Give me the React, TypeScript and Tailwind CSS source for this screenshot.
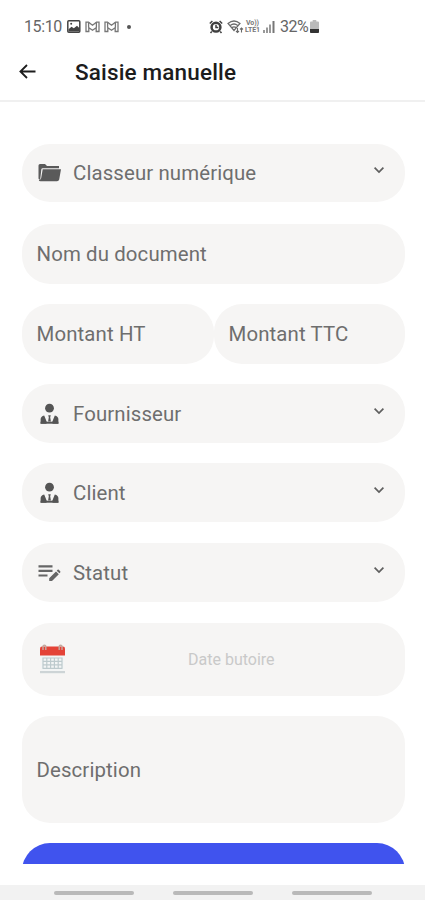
import type { ReactNode } from 'react';

interface FieldProps {
  label: string;
  icon?: ReactNode;
  className?: string;
  select?: boolean;
}

function Field({ label, icon, className = 'h-[59px]', select }: FieldProps) {
  return (
    <div className={`flex shrink-0 items-center rounded-[28px] bg-[#f6f5f4] pl-[14.5px] pr-5 ${className}`}>
      {icon && <span className="flex w-[36.5px] shrink-0 items-center">{icon}</span>}
      <span className="whitespace-nowrap text-[20.4px] leading-6 tracking-[0.12px] text-[#6e6e6e]">{label}</span>
      {select && (
        <svg className="-mt-1.5 ml-auto h-3 w-3" viewBox="0 0 12 12" fill="none" stroke="#5f5f5f" strokeWidth={1.7}>
          <path d="M1.6 3.6 6 8 10.4 3.6" />
        </svg>
      )}
    </div>
  );
}

function FolderIcon() {
  return (
    <svg className="h-5 w-6" viewBox="0 0 24 20" fill="#5a5a5a">
      <path d="M1.5 2.5Q1.5 1 3 1H8l2 2h12v2.2H5.7Q4.5 5.2 4.3 6.4L3.2 16.8Q1.5 16.5 1.5 15.5Z" />
      <path d="M5.7 6.3h18.3L22.2 16.5Q21.8 18.3 20 18.3H3.5Q2 18.3 1.8 17Q3.9 17 4.2 15Z" />
    </svg>
  );
}

function PersonIcon() {
  return (
    <svg className="ml-[3px] h-[22px] w-5" viewBox="0 0 20 22" fill="#555">
      <circle cx="9.5" cy="5.2" r="4.4" />
      <path d="M.6 20.7v-4q0-3.3 3.6-4.1l2.3 5.6V20.7Z" />
      <path d="M18.4 20.7v-4q0-3.3-3.6-4.1l-2.3 5.6V20.7Z" />
      <path d="M8.2 12.2h2.6l-.6 2 .7 4.2h-2.8l.7-4.2Z" />
      <path d="M.6 18.7h17.8v2H.6Z" />
    </svg>
  );
}

function EditIcon() {
  return (
    <svg className="h-5 w-6" viewBox="0 0 24 20" fill="#666">
      <path d="M1.5 2.2h14v2.2h-14zM1.5 6.8h14V9h-14zM1.5 11.4h9v2.2h-9z" />
      <path d="M12.2 18v-2.8l6.8-6.8 2.8 2.8L15 18ZM19.7 7.7l.9-.9q.6-.5 1.2 0l1.4 1.4q.5.6 0 1.2l-.8.9Z" />
    </svg>
  );
}

function CalendarIcon() {
  return (
    <svg className="-mt-0.5 h-8 w-[27px]" viewBox="0 0 27 32">
      <path d="M2 11h23v17.5H2z" fill="#f3f5f5" />
      <path d="M1 28h25v2.2H1z" fill="#cdd4d6" />
      <path d="M1 5.5Q1 3.5 3 3.5h21q2 0 2 2V12.5H1Z" fill="#e44337" />
      <path
        d="M3.5 15h20M3.5 18.4h20M3.5 21.8h20M3.5 25.4h20M4 14.5v11M7.8 14.5v11M11.6 14.5v11M15.4 14.5v11M19.2 14.5v11M23 14.5v11"
        stroke="#bdcacd"
        strokeWidth="1.2"
        fill="none"
      />
      <path d="M4 7V3.6a1.4 1.4 0 0 1 2.8 0V7M20.2 7V3.6a1.4 1.4 0 0 1 2.8 0V7" stroke="#c3aaa0" strokeWidth="1.4" fill="none" />
    </svg>
  );
}

function MailIcon() {
  return (
    <svg className="h-3 w-[15px]" viewBox="0 0 15 12" fill="none" stroke="#777" strokeWidth="1.3">
      <path d="M1 1.2h2.5l4 3.1 4-3.1H14v9.3h-2.8V6.8L7.5 9.2 3.8 6.8v3.7H1Z" />
      <path d="M3.6 1.2v5.4M11.4 1.2v5.4" />
    </svg>
  );
}

function StatusBar() {
  return (
    <div className="flex h-[46px] shrink-0 items-center pl-6 pt-[7px] text-[#666]">
      <span className="w-[43px] text-[16px] tracking-[-0.4px]">15:10</span>
      <svg className="h-[13px] w-[14px]" viewBox="0 0 14 13">
        <rect x=".8" y=".8" width="12" height="11.4" rx="1" fill="#fff" stroke="#444" strokeWidth="1.5" />
        <path d="M1.5 11.5V9.3l3-2.5 2.3 1.4L10 5.8l2.5 2.5v3.2Z" fill="#444" />
        <circle cx="4.2" cy="3.8" r="1" fill="#444" />
      </svg>
      <div className="ml-1 flex gap-1">
        <MailIcon />
        <MailIcon />
      </div>
      <span className="ml-2 h-1 w-1 rounded-full bg-[#555]" />
      <svg className="ml-[78px] h-[14px] w-[14px]" viewBox="0 0 14 14" fill="none" stroke="#3f3f3f">
        <circle cx="7" cy="7.2" r="4.4" strokeWidth="2.5" />
        <path d="M7 4.8v2.7h2.3M.8 3.5 3.4 1M13.2 3.5 10.6 1M2.8 11.5 1.5 13M11.2 11.5l1.3 1.5" strokeWidth="1.5" />
      </svg>
      <svg className="ml-1 h-[14px] w-[17px]" viewBox="0 0 17 14" fill="none" stroke="#6a6a6a" strokeWidth="1.3">
        <path d="M1 3.4q6-4.8 12 0L7 10.5ZM3.2 5.4q3.8-2.8 7.6 0M5.2 7.4q1.8-1.2 3.6 0" />
        <path d="M10.5 8v4.5M9 11l1.5 1.5L12 11M14.5 12.5V8M13 9.5 14.5 8 16 9.5" strokeWidth="1.1" />
      </svg>
      <span className="flex w-[17px] flex-col items-center text-[7px] font-bold leading-[7px] tracking-[-0.1px] text-[#777]">
        <span>Vo))</span>
        <span>LTE1</span>
      </span>
      <svg className="ml-[2px] h-3 w-3" viewBox="0 0 12 12" fill="#777">
        <path d="M0 9h2v3H0zM3 6.5h2V12H3zM6 3.5h2V12H6z" fill="#999" />
        <path d="M9.5 0h2v12h-2z" />
      </svg>
      <span className="ml-[5px] text-[16px] tracking-[-0.5px]">32%</span>
      <svg className="ml-[2px] h-[13px] w-[9px]" viewBox="0 0 9 13">
        <path d="M2.7 0h3.6v1.5H8q1 0 1 1V12q0 1-1 1H1q-1 0-1-1V2.5q0-1 1-1h1.7Z" fill="#bbb" />
        <path d="M0 9h9v3q0 1-1 1H1q-1 0-1-1Z" fill="#333" />
      </svg>
    </div>
  );
}

export default function App() {
  return (
    <div className="flex h-[900px] w-[425px] flex-col overflow-hidden bg-white font-[Roboto,sans-serif]">
      <StatusBar />

      <header className="flex h-14 shrink-0 items-center border-b-2 border-[#f0f0f0] pl-[19px]">
        <svg className="-mt-1.5 h-[17px] w-[17px]" viewBox="0 0 17 17" fill="none" stroke="#1c1c1c" strokeWidth="1.8">
          <path d="M16.5 9.5H1.7M8 3 1.4 9.5 8 16" />
        </svg>
        <h1 className="ml-[39px] whitespace-nowrap text-[22.5px] font-medium tracking-[0.16px] text-[#1c1c1c]">Saisie manuelle</h1>
      </header>

      <main className="flex h-[762px] shrink-0 flex-col overflow-hidden pl-[22px] pr-5 pt-[42px]">
        <Field label="Classeur numérique" icon={<FolderIcon />} className="h-[58px]" select />
        <Field label="Nom du document" className="mt-[22px] h-[60px]" />
        <div className="mt-5 flex shrink-0">
          <Field label="Montant HT" className="h-[60px] w-[192px]" />
          <Field label="Montant TTC" className="h-[60px] flex-1" />
        </div>
        <Field label="Fournisseur" icon={<PersonIcon />} className="mt-5 h-[59px]" select />
        <Field label="Client" icon={<PersonIcon />} className="mt-5 h-[59px]" select />
        <Field label="Statut" icon={<EditIcon />} className="mt-[21px] h-[59px]" select />
        <div className="mt-[21px] flex h-[73px] shrink-0 items-center rounded-[28px] bg-[#f6f5f4] pl-[17px]">
          <CalendarIcon />
          <span className="ml-[122px] text-[16px] text-[#c9c9c9]">Date butoire</span>
        </div>
        <Field label="Description" className="mt-5 h-[107px]" />
        <button className="mt-5 h-[60px] shrink-0 rounded-[28px] bg-[#4053ee]" aria-label="Enregistrer" />
      </main>

      <div className="mt-[21px] flex h-[15px] shrink-0 justify-center gap-[39px] bg-[#f2f2f2] pt-[6px]">
        <span className="h-1 w-20 rounded-full bg-[#b9b9b9]" />
        <span className="h-1 w-20 rounded-full bg-[#b9b9b9]" />
        <span className="h-1 w-20 rounded-full bg-[#b9b9b9]" />
      </div>
    </div>
  );
}
